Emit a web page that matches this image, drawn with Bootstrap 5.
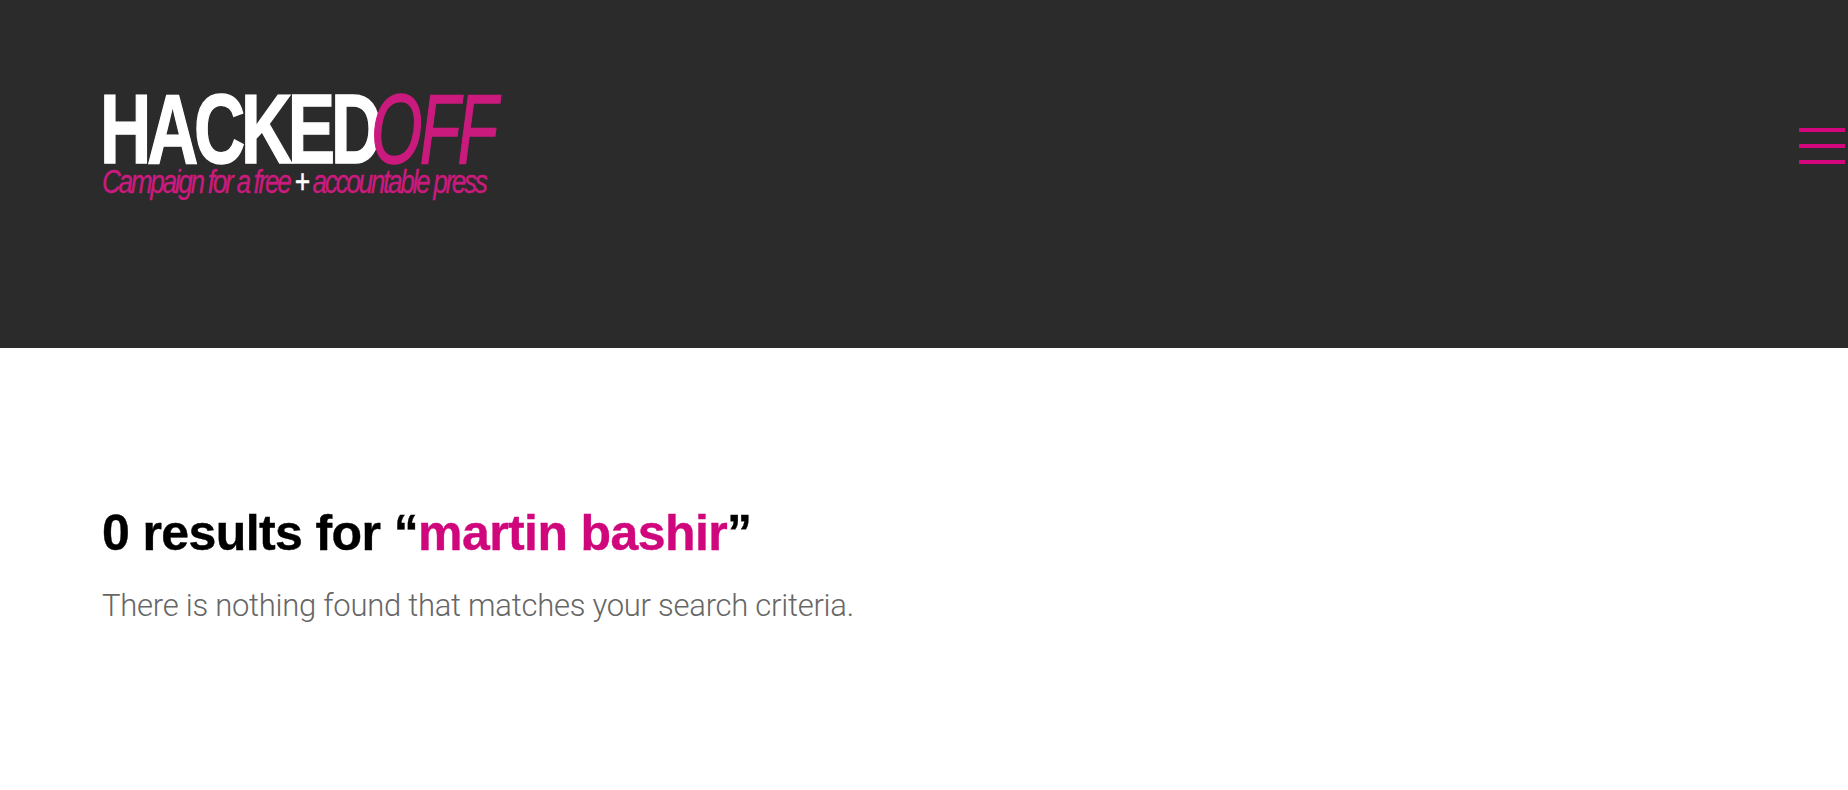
<!DOCTYPE html>
<html lang="en">
<head>
<meta charset="UTF-8">
<title>Search results - Hacked Off</title>
<link href="https://cdn.jsdelivr.net/npm/bootstrap@5.3.2/dist/css/bootstrap.min.css" rel="stylesheet">
<style>
body { font-family: "Liberation Sans", Arial, sans-serif; background: #fff; overflow: hidden; }
.site-head { background: #2b2b2b; height: 348px; padding: 94px 3px 0 102px; }
.logo-link { color: #fff; text-decoration: none; display: block; width: 410px; }
.logo-main { font-size: 98px; line-height: 70px; height: 68px; white-space: nowrap; margin-left: -2px; }
.logo-hacked { display: inline-block; width: 271px; font-weight: 700; letter-spacing: -6px; transform: scaleX(.725); transform-origin: left; -webkit-text-stroke: 1.5px #fff; }
.logo-off { display: inline-block; width: 124px; color: #cb1a7e; font-style: italic; letter-spacing: -4px; transform: scaleX(.675); transform-origin: left; -webkit-text-stroke: 1.5px #cb1a7e; }
.logo-tag { color: #cb1a7e; font-size: 34px; line-height: 38px; font-style: italic; letter-spacing: -3px; white-space: nowrap; transform: scaleX(.77); transform-origin: left; -webkit-text-stroke: .3px #cb1a7e; }
.logo-tag b { color: #fff; font-weight: 400; -webkit-text-stroke: .6px #fff; }
.burger { width: 46px; margin-top: 34px; border: 0; background: none; padding: 0; gap: 12px; }
.burger span { display: block; flex: 0 0 4px; background: #d4067e; }
.result-wrap { padding: 155px 0 0 102px; }
.result-title { font-size: 50px; line-height: 60px; font-weight: 700; letter-spacing: -.6px; color: #000; margin-bottom: 23px; -webkit-text-stroke: .4px currentColor; }
.result-title em { color: #d0067c; font-style: normal; }
.result-text { font-family: Roboto, "Liberation Sans", sans-serif; font-size: 31px; line-height: 40px; font-weight: 300; letter-spacing: -.26px; color: #666; margin: 0; }
</style>
</head>
<body>

<header class="site-head d-flex justify-content-between align-items-start">
	<a class="logo-link" href="#">
		<div class="logo-main"><span class="logo-hacked">HACKED</span><span class="logo-off">OFF</span></div>
		<div class="logo-tag">Campaign for a free <b>+</b> accountable press</div>
	</a>
	<button type="button" class="burger d-flex flex-column" aria-label="Toggle navigation">
		<span class="w-100"></span>
		<span class="w-100"></span>
		<span class="w-100"></span>
	</button>
</header>

<main class="result-wrap">
	<h1 class="result-title">0 results for “<em>martin bashir</em>”</h1>
	<p class="result-text">There is nothing found that matches your search criteria.</p>
</main>

<script src="https://cdn.jsdelivr.net/npm/bootstrap@5.3.2/dist/js/bootstrap.bundle.min.js"></script>
</body>
</html>
